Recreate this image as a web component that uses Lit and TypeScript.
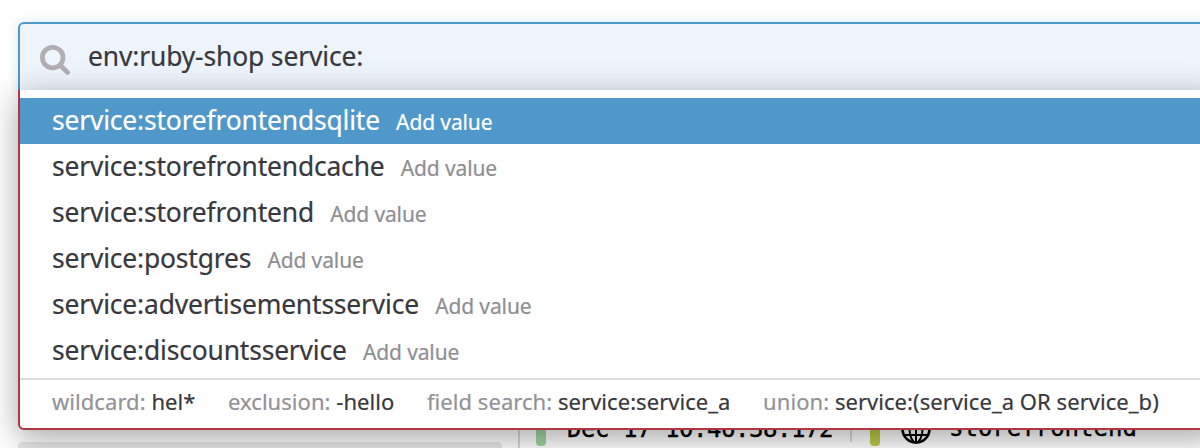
import { LitElement, html, css } from "lit";
import { customElement } from "lit/decorators.js";
import { classMap } from "lit/directives/class-map.js";

const SUGGESTIONS = ["storefrontendsqlite", "storefrontendcache", "storefrontend", "postgres", "advertisementsservice", "discountsservice"];
const HINTS = [
  ["wildcard:", "hel*"],
  ["exclusion:", "-hello"],
  ["field search:", "service:service_a"],
  ["union:", "service:(service_a OR service_b)"],
];

@customElement("app-root")
export class AppRoot extends LitElement {
  static styles = css`
    :host {
      display: block;
      position: relative;
      height: 448px;
      overflow: hidden;
      box-sizing: border-box;
      padding: 22px 0 0 18px;
      background: #fff;
      color: #38383d;
      font-family: "Noto Sans", sans-serif;
      -webkit-text-stroke: 0.2px currentColor;
    }
    .search {
      display: flex;
      align-items: center;
      box-sizing: border-box;
      width: 1202px;
      height: 76px;
      padding: 0 0 8px 20px;
      border: 2px solid #4f98c9;
      border-radius: 6px;
      background: #edf4fb;
      box-shadow: 0 0 12px rgba(79, 152, 201, 0.22);
      font-size: 26.4px;
      letter-spacing: -0.12px;
    }
    .glass { width: 30px; height: 30px; margin-right: 18px; margin-top: 7px; }
    .query { line-height: 36px; white-space: pre; }
    .menu {
      position: absolute;
      left: 18px;
      top: 90px;
      width: 1202px;
      height: 340px;
      box-sizing: border-box;
      padding-top: 8px;
      border: 2px solid #ae3741;
      border-top: 0;
      border-radius: 0 0 6px 6px;
      background: #fff;
      box-shadow: 0 8px 32px rgba(0, 0, 0, 0.36);
    }
    .item {
      display: flex;
      align-items: baseline;
      box-sizing: border-box;
      height: 46px;
      padding-left: 32px;
      gap: 16.2px;
      font-size: 26.4px;
      line-height: 44px;
      letter-spacing: -0.16px;
      white-space: nowrap;
    }
    .add { font-size: 21px; color: #8e8e93; letter-spacing: -0.12px; }
    .active { background: #4f98c9; color: #fff; }
    .active .add { color: #fff; }
    .hints {
      display: flex;
      gap: 32.6px;
      margin-top: 4px;
      padding-left: 32px;
      border-top: 2px solid #dcdce1;
      font-size: 22px;
      line-height: 42px;
      letter-spacing: 0.05px;
      white-space: nowrap;
    }
    .label { color: #929297; }
    .logs { display: flex; height: 104px; margin-top: 246px; align-items: flex-start; }
    .facet { width: 484px; height: 40px; margin-top: 98px; border-radius: 4px; background: #e8e8e8; }
    .row {
      display: flex;
      align-items: flex-start;
      margin-left: 16px;
      height: 110px;
      padding-left: 16px;
      border-left: 2px solid #d9d9de;
      margin-top: 60px;
      color: #000;
      font: 24px/34px "DejaVu Sans Mono", monospace;
      -webkit-text-stroke: 0.4px #000;
      white-space: pre;
    }
    .bar { width: 10px; height: 42px; border-radius: 4px; background: #9ed6a0; }
    .lime { background: #bdca45; }
    .date { margin: 8px 0 0 21px; width: 283px; letter-spacing: -0.45px; }
    .rule { width: 2px; height: 38px; margin-right: 18px; background: #d9d9de; }
    .globe { width: 30px; height: 30px; margin: 10px 0 0 21px; }
    .name { margin: 7px 0 0 18px; }
  `;

  render() {
    return html`
      <div class="search">
        <svg class="glass" viewBox="0 0 30 30" fill="none" stroke="#b2afb4" stroke-linecap="round">
          <circle cx="12.7" cy="12.6" r="10.3" stroke-width="4.8" />
          <path d="M20.5 20.5 27.5 27.4" stroke-width="4.8" />
        </svg>
        <span class="query">env:ruby-shop service:</span>
      </div>
      <div class="logs">
        <div class="facet"></div>
        <div class="row">
          <div class="bar"></div>
          <span class="date">Dec 17 10:46:38.172</span>
          <div class="rule"></div>
          <div class="bar lime"></div>
          <svg class="globe" viewBox="0 0 30 30" fill="none" stroke="#000" stroke-width="2">
            <circle cx="15" cy="15" r="13.5" stroke-width="2.6" />
            <ellipse cx="15" cy="15" rx="6.5" ry="13.5" />
            <path d="M15 1v28M1 15h28M3 9h24M3 21h24" />
          </svg>
          <span class="name">storefrontend</span>
        </div>
      </div>
      <div class="menu">
        ${SUGGESTIONS.map(
          (s, i) => html`<div class=${classMap({ item: true, active: i === 0 })}>
            <span>service:${s}</span><span class="add">Add value</span>
          </div>`
        )}
        <div class="hints">
          ${HINTS.map(([l, v]) => html`<span><span class="label">${l}</span> ${v}</span>`)}
        </div>
      </div>
    `;
  }
}
